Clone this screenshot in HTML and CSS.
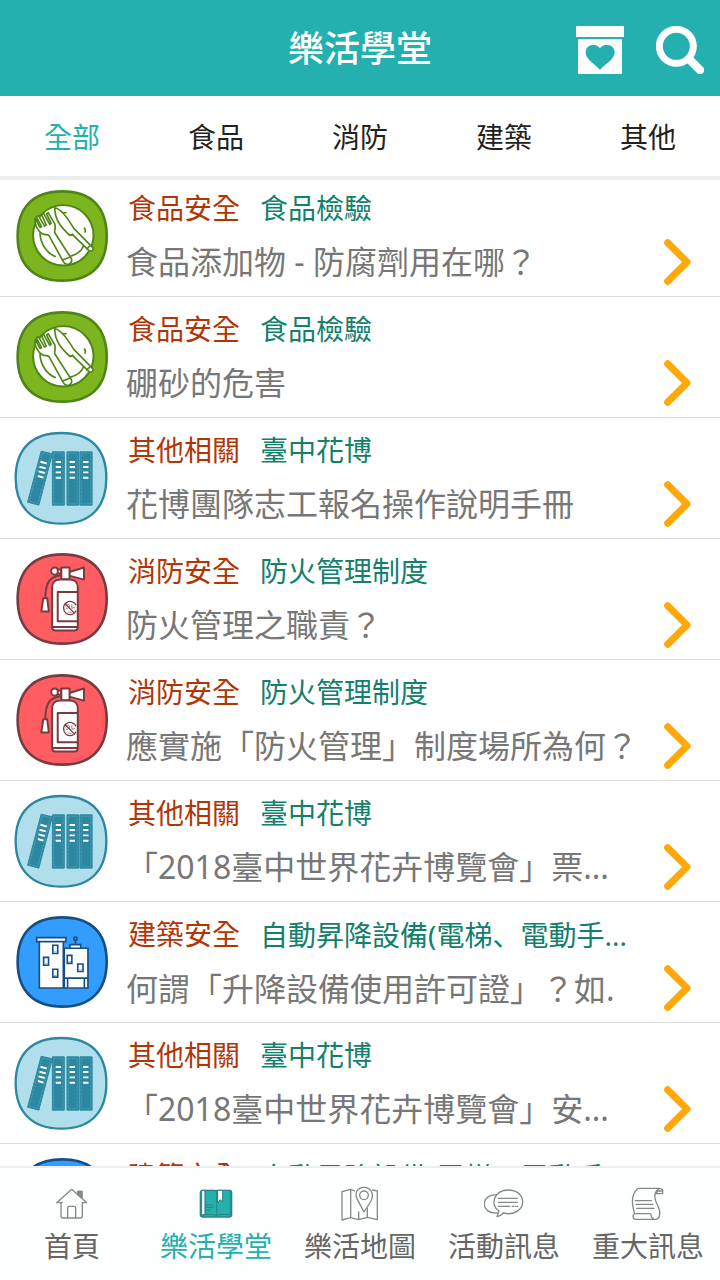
FILE: index.html
```html
<!DOCTYPE html>
<html lang="zh-Hant">
<head>
<meta charset="utf-8">
<meta name="viewport" content="width=device-width, initial-scale=1">
<title>樂活學堂</title>
<link rel="stylesheet" href="styles.css">
</head>
<body>
<svg class="sprite" aria-hidden="true">
  <symbol id="food" viewBox="46 28 280 280">
    <path d="M187 32C275 32 322 80 322 168S275 304 187 304 51 256 51 168 99 32 187 32Z" fill="#7db51f" stroke="#4f8517" stroke-width="8"/>
    <circle cx="190" cy="166" r="92" fill="#fff" stroke="#4f8517" stroke-width="6"/>
    <g fill="none" stroke="#4f8517" stroke-width="5" stroke-linecap="round" stroke-linejoin="round">
      <path d="M119 160C120 190 140 221 165 230M210 230C232 224 247 211 252 197M180 98L198 97M254 144C258 148 258 152 256 156"/>
      <path d="M164 82C182 84 206 118 222 145L281 205Q280 216 269 213L218 164 210 166C190 148 163 122 164 82Z" fill="#fff"/>
      <path d="M210 166L219 163M262 207L272 197"/>
      <path d="M104 114C101 131 112 153 126 161 134 165 141 163 146 166L190 246Q197 258 208 253 219 247 214 236L164 158C162 150 168 144 164 131L144 97 139 101 153 129 149 133 130 99 124 103 138 135 133 138 114 106 108 109 124 140 119 142Z" fill="#fff"/>
      <path d="M188 241L211 232"/>
    </g>
  </symbol>
  <symbol id="books" viewBox="48 21 278 278">
    <path d="M185 24C274 24 321 72 321 160S274 298 185 298 47 248 47 160 96 24 185 24Z" fill="#b0dfeb" stroke="#2c87a0" stroke-width="7"/>
    <g fill="#2c87a0" stroke="#2c87a0" stroke-width="3" stroke-linejoin="round">
      <path d="M124 79L158 87 117 242 83 233Z"/>
      <path d="M158 81H194V242H158ZM202 81H237V242H202ZM241 81H278V242H241Z"/>
    </g>
    <g fill="none" stroke="#69b3c5" stroke-width="1.5" stroke-dasharray="8 3">
      <path d="M127 84L153 90 114 237 88 230ZM162 85H190V238H162ZM206 85H233V238H206ZM245 85H274V238H245Z"/>
    </g>
    <path d="M122 111L141 116M119 126L138 131M116 140L135 145M114 154L131 159M168 112H184M168 127H184M168 143H184M168 159H184M210 112H226M210 127H226M210 143H226M210 159H226M251 112H267M251 127H267M251 143H267M251 159H267" stroke="#fff" stroke-width="6" fill="none"/>
  </symbol>
  <symbol id="fire" viewBox="46 22 280 280">
    <path d="M187 26C275 26 322 75 322 162S275 298 187 298 51 250 51 162 99 26 187 26Z" fill="#ff5d61" stroke="#783b40" stroke-width="8"/>
    <g fill="#fff" stroke="#783b40" stroke-width="6" stroke-linejoin="round">
      <path d="M182 90C148 94 136 112 135 160" fill="none"/>
      <path d="M129 160H141L146 200H123Z"/>
      <path d="M208 80L253 66V103L208 91Z"/>
      <circle cx="164" cy="77" r="11"/>
      <path d="M173 72H184V84H173Z"/>
      <path d="M184 66H209V102H184Z"/>
      <path d="M156 128Q156 103 180 103H210Q234 103 234 128V248Q234 258 224 258H166Q156 258 156 248Z"/>
      <path d="M232 141H173V230H232M158 247H232" fill="none"/>
      <g fill="none" stroke-width="4"><path d="M229 181A20 20 0 1 0 229 198M194 175L224 205"/><path d="M196 184L205 178 211 183 204 190 198 190M205 201L215 203M216 178V190L226 188" stroke-width="2"/></g>
    </g>
  </symbol>
  <symbol id="building" viewBox="46 31 280 280">
    <path d="M187 35C275 35 322 83 322 170S275 307 187 307 51 258 51 170 99 35 187 35Z" fill="#339cff" stroke="#184f83" stroke-width="8"/>
    <g fill="#fff" stroke="#184f83" stroke-width="5">
      <path d="M193 129H265V250H193ZM210 118H243V129H210Z"/>
      <path d="M117 109H190V250H117ZM109 97H198V109H109Z"/>
      <path d="M193 220H265M203 222V250M254 222V250M227 106V118" fill="none"/>
      <circle cx="227" cy="100" r="5" fill="#339cff"/>
      <path d="M158 120H173V145H158ZM130 157H145V181H130ZM158 193H173V217H158ZM202 151H216V175H202ZM234 177H250V200H234Z"/>
    </g>
    <path d="M161 140H170M133 176H142M161 212H170M205 170H213M237 195H247" stroke="#6db8ff" stroke-width="3"/>
  </symbol>
  <symbol id="chevron" viewBox="1272 178 81 138">
    <path d="M1283 189L1341 247 1283 305" fill="none" stroke="#ffa80a" stroke-width="21" stroke-linecap="round" stroke-linejoin="round"/>
  </symbol>
</svg>

<header class="topbar">
  <h1 class="topbar-title">樂活學堂</h1>
  <div class="topbar-actions">
    <button class="icon-button" type="button" aria-label="收藏">
      <svg viewBox="948 78 144 144"><path d="M952 78H1088Q1092 78 1092 82V111H948V82Q948 78 952 78ZM954 118H1086V218Q1086 222 1082 222H958Q954 222 954 218ZM1020 209C1000 189 977 177 977 157 977 133 1008 126 1020 145 1032 126 1064 133 1064 157 1064 177 1040 189 1020 209Z" fill="#fff" fill-rule="evenodd"/></svg>
    </button>
    <button class="icon-button" type="button" aria-label="搜尋">
      <svg viewBox="1188 78 144 144" fill="none" stroke="#fff" stroke-linecap="round"><circle cx="1249" cy="139" r="51" stroke-width="21"/><path d="M1287 177L1320 210" stroke-width="25"/></svg>
    </button>
  </div>
</header>

<nav class="tabs" aria-label="分類">
  <button class="tab tab-active" type="button">全部</button>
  <button class="tab" type="button">食品</button>
  <button class="tab" type="button">消防</button>
  <button class="tab" type="button">建築</button>
  <button class="tab" type="button">其他</button>
</nav>

<main class="list">
  <a class="row" href="#"><svg class="row-icon"><use href="#food"/></svg><div class="row-text"><p class="tags"><span class="tag-kind">食品安全</span><span class="tag-topic">食品檢驗</span></p><h2 class="row-title">食品添加物 - 防腐劑用在哪？</h2></div><svg class="chevron"><use href="#chevron"/></svg></a>
  <a class="row" href="#"><svg class="row-icon"><use href="#food"/></svg><div class="row-text"><p class="tags"><span class="tag-kind">食品安全</span><span class="tag-topic">食品檢驗</span></p><h2 class="row-title">硼砂的危害</h2></div><svg class="chevron"><use href="#chevron"/></svg></a>
  <a class="row" href="#"><svg class="row-icon"><use href="#books"/></svg><div class="row-text"><p class="tags"><span class="tag-kind">其他相關</span><span class="tag-topic">臺中花博</span></p><h2 class="row-title">花博團隊志工報名操作說明手冊</h2></div><svg class="chevron"><use href="#chevron"/></svg></a>
  <a class="row" href="#"><svg class="row-icon"><use href="#fire"/></svg><div class="row-text"><p class="tags"><span class="tag-kind">消防安全</span><span class="tag-topic">防火管理制度</span></p><h2 class="row-title">防火管理之職責？</h2></div><svg class="chevron"><use href="#chevron"/></svg></a>
  <a class="row" href="#"><svg class="row-icon"><use href="#fire"/></svg><div class="row-text"><p class="tags"><span class="tag-kind">消防安全</span><span class="tag-topic">防火管理制度</span></p><h2 class="row-title">應實施「防火管理」制度場所為何？</h2></div><svg class="chevron"><use href="#chevron"/></svg></a>
  <a class="row" href="#"><svg class="row-icon"><use href="#books"/></svg><div class="row-text"><p class="tags"><span class="tag-kind">其他相關</span><span class="tag-topic">臺中花博</span></p><h2 class="row-title">「2018臺中世界花卉博覽會」票...</h2></div><svg class="chevron"><use href="#chevron"/></svg></a>
  <a class="row" href="#"><svg class="row-icon"><use href="#building"/></svg><div class="row-text"><p class="tags"><span class="tag-kind">建築安全</span><span class="tag-topic">自動昇降設備(電梯<span class="comma" lang="ja">、</span>電動手...</span></p><h2 class="row-title">何謂「升降設備使用許可證」？如.</h2></div><svg class="chevron"><use href="#chevron"/></svg></a>
  <a class="row" href="#"><svg class="row-icon"><use href="#books"/></svg><div class="row-text"><p class="tags"><span class="tag-kind">其他相關</span><span class="tag-topic">臺中花博</span></p><h2 class="row-title">「2018臺中世界花卉博覽會」安...</h2></div><svg class="chevron"><use href="#chevron"/></svg></a>
  <a class="row" href="#"><svg class="row-icon"><use href="#building"/></svg><div class="row-text"><p class="tags"><span class="tag-kind">建築安全</span><span class="tag-topic">自動昇降設備(電梯<span class="comma" lang="ja">、</span>電動手...</span></p></div></a>
</main>

<nav class="bottom-nav" aria-label="主選單">
  <a class="nav-item" href="#">
    <svg class="nav-icon" viewBox="156 132 120 120"><path d="M170 188L215 148 260 188H247V228Q247 234 241 234H189Q183 234 183 228V188ZM203 234V203Q203 199 207 199H223Q227 199 227 203V234M187 188H183M234 165V154H246V176"/><path class="solid" d="M233 154H246V175L233 164Z"/></svg>
    首頁
  </a>
  <a class="nav-item nav-active" href="#" aria-current="page">
    <svg class="nav-icon nav-icon-book" viewBox="588 132 120 120"><rect x="601" y="151" width="94" height="80" rx="5" fill="#23b0ae"/><path d="M605 224V154Q606 151 610 151H616V224Z" fill="#fff"/><path d="M601 157Q601 151 608 151H640Q648 151 650 156 652 151 659 151H689Q695 151 695 157V226Q695 231 689 231H607Q601 231 601 226ZM650 156V230M615 152V224M604 225Q640 220 650 227 660 220 692 225M618 195H640M618 202H640M618 210H632M691 154V223"/><path d="M654 151H668V186L661 179 654 186Z" fill="#fff"/></svg>
    樂活學堂
  </a>
  <a class="nav-item" href="#">
    <svg class="nav-icon" viewBox="-60 132 120 120"><path d="M-16 153L-28 148-54 155V240L-28 233-4 239 22 232 52 239V153L38 150M-28 148V233M-4 216V239M22 205V232"/><path d="M12 216L-5 184C-20 160-8 142 12 142S44 160 33 183Z" fill="#fdfefe"/><circle cx="12" cy="166" r="13"/></svg>
    樂活地圖
  </a>
  <a class="nav-item" href="#">
    <svg class="nav-icon" viewBox="372 132 120 120"><path d="M409 165C389 163 373 175 373 192S388 221 412 219"/><path d="M411 230L417 213C388 195 402 150 445 150 470 150 488 165 488 186 488 211 459 227 430 219 424 226 419 229 411 230Z"/><path d="M415 175H472M415 187H472M415 199H449M456 199H461M467 199H473"/></svg>
    活動訊息
  </a>
  <a class="nav-item" href="#">
    <svg class="nav-icon" viewBox="804 132 120 120"><path d="M899 145H835C815 160 814 190 824 221M899 145C876 158 884 180 894 198 902 216 902 236 887 238M890 161H908V152Q907 145 898 145M890 161L892 153H907M887 238H826C817 236 817 222 826 221H870C876 222 870 232 880 236M826 182H874M828 193H879M830 205H882"/></svg>
    重大訊息
  </a>
</nav>
</body>
</html>
```
FILE: styles.css
```css
* {
  box-sizing: border-box;
}

body {
  margin: 0;
  height: 100vh;
  display: flex;
  flex-direction: column;
  overflow: hidden;
  background: #fff;
  color: #222;
  font-family: "Noto Sans", "Noto Sans CJK TC", sans-serif;
  font-size: 28px;
}

h1, h2, p {
  margin: 0;
  font-weight: 400;
}

button {
  padding: 0;
  border: 0;
  background: none;
  color: inherit;
  font: inherit;
}

a {
  color: inherit;
  text-decoration: none;
}

symbol {
  overflow: visible;
}

.sprite {
  position: absolute;
  width: 0;
  height: 0;
}

.topbar {
  flex: none;
  display: grid;
  grid-template-columns: 1fr auto 1fr;
  align-items: center;
  min-height: 96px;
  padding: 0 16px;
  background: #23b0ae;
  color: #fff;
}

.topbar-title {
  grid-column: 2;
  padding-top: 2px;
  font-size: 36px;
  line-height: 48px;
  font-weight: 500;
}

.topbar-actions {
  display: flex;
  justify-content: flex-end;
  gap: 32px;
  padding-top: 4px;
}

.icon-button {
  width: 48px;
  height: 48px;
}

.icon-button svg {
  display: block;
  width: 100%;
  height: 100%;
}

.tabs {
  flex: none;
  display: flex;
  position: relative;
  z-index: 1;
  background: #fff;
  border-bottom: 4px solid #eee;
}

.tab {
  flex: 1;
  padding-top: 2px;
  line-height: 78px;
}

.tab-active {
  color: #23b0ae;
}

.list {
  flex: 1;
  min-height: 0;
  margin-top: -4px;
  overflow: hidden;
}

.row {
  display: flex;
  gap: 18px;
  height: 121px;
  padding: 14px 29px 0 16px;
  border-bottom: 1px solid #ddd;
}

.row-icon {
  flex: none;
  width: 92px;
  height: 92px;
  overflow: visible;
}

.row-text {
  flex: 1;
  min-width: 0;
  white-space: nowrap;
}

.tags {
  display: flex;
  gap: 20px;
  padding-left: 2px;
  line-height: 36px;
}

.tag-kind {
  color: #b03606;
}

.tag-topic {
  color: #12806c;
}

.comma {
  font-family: "Noto Sans CJK JP", sans-serif;
}

.row-title {
  margin-top: 14px;
  color: #777;
  font-size: 32px;
  line-height: 44px;
}

.chevron {
  flex: none;
  width: 27px;
  height: 46px;
  margin-top: 49px;
}

.bottom-nav {
  flex: none;
  display: flex;
  padding: 16px 0 12px;
  border-top: 2px solid #eee;
  background: #fdfefe;
  color: #666;
}

.nav-item {
  flex: 1;
  display: flex;
  flex-direction: column;
  align-items: center;
  line-height: 44px;
}

.nav-active {
  color: #23b0ae;
}

.nav-icon {
  width: 40px;
  height: 40px;
  fill: none;
  stroke: #888;
  stroke-width: 4;
  stroke-linejoin: round;
  stroke-linecap: round;
}

.nav-icon .solid {
  fill: #888;
}

.nav-icon-book {
  stroke: #2a8583;
  stroke-width: 3;
}
```
